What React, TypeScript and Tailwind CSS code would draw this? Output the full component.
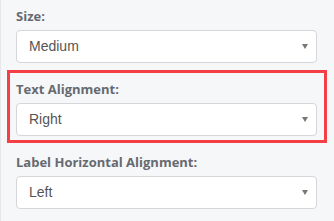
type FieldProps = {
  label: string;
  value: string;
};

function Field({ label, value }: FieldProps) {
  return (
    <div>
      <div className="h-[18px] leading-[18px] mb-[5px] text-[13px] font-bold text-[#666a70] font-['Open_Sans',sans-serif]">
        {label}
      </div>
      <div className="h-[33px] bg-white border border-[#d4d6d9] rounded-[4px] flex items-center justify-between pl-[12px] pr-[8px]">
        <span className="text-[14px] text-[#555] font-['Liberation_Sans',Arial,sans-serif]">{value}</span>
        <span className="w-0 h-0 border-l-[3.5px] border-r-[3.5px] border-t-[5px] border-l-transparent border-r-transparent border-t-[#777]" />
      </div>
    </div>
  );
}

export default function App() {
  return (
    <div className="w-[334px] h-[221px] bg-[#f6f7f9] border-l border-[#e6e7ea] overflow-hidden">
      <div className="pl-[6px] pr-[7px]">
        <div className="pl-[9px] pr-[10px] pt-[7px]">
          <Field label="Size:" value="Medium" />
        </div>
        {/* highlighted setting */}
        <div className="mt-[7px] border-[3px] border-[#f43f46] pl-[6px] pr-[7px] pt-[7px] pb-[4px]">
          <Field label="Text Alignment:" value="Right" />
        </div>
        <div className="pl-[9px] pr-[10px] pt-[10px]">
          <Field label="Label Horizontal Alignment:" value="Left" />
        </div>
      </div>
    </div>
  );
}
